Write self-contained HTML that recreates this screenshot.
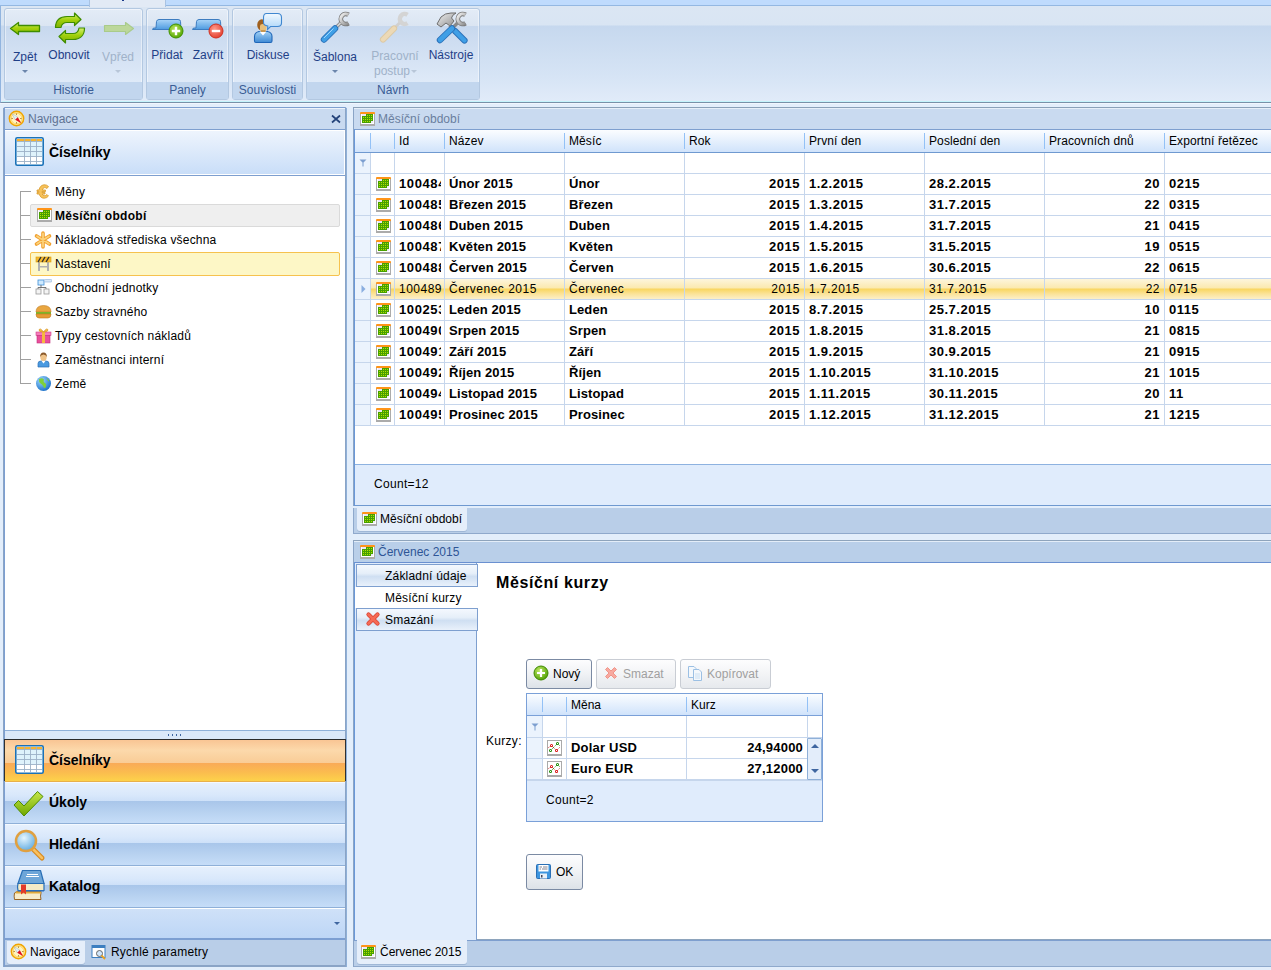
<!DOCTYPE html>
<html><head><meta charset="utf-8">
<style>
*{box-sizing:border-box;margin:0;padding:0}
html,body{width:1271px;height:970px;overflow:hidden;background:#e3eefb;font-family:"Liberation Sans",sans-serif;font-size:12px;color:#000}
.a{position:absolute}
.t{position:absolute;white-space:nowrap;line-height:14px}
/* ribbon */
#rtop{left:0;top:0;width:1271px;height:6px;background:#bfdbfd;border-bottom:1px solid #94b8e2}
#rtab{left:89px;top:0;width:77px;height:7px;background:#e2eaf5;border-left:1px solid #a9c3e3;border-right:1px solid #a9c3e3}
#rbody{left:0;top:6px;width:1271px;height:97px;box-shadow:0 1px 0 #f0f6fe;background:linear-gradient(#dbe6f3 0,#d9e5f3 19px,#c6d8ee 20px,#d6e4f5 70px,#e1ebf9 95px);border-bottom:1px solid #7890a8;border-left:1px solid #91b4df}
.grp{position:absolute;top:8px;height:92px;border:1px solid #b3c8e1;border-radius:3px;background:linear-gradient(#e3ecf7 0,#dbe5f2 17px,#c7d8ee 17px,#dfeaf8 74px);box-shadow:inset 0 0 0 1px rgba(255,255,255,.45)}
.glab{position:absolute;left:0;right:0;bottom:0;height:17px;background:#c2d6ee;color:#3a5d95;text-align:center;line-height:17px;font-size:12px}
.rbtn{position:absolute;color:#1f4087;font-size:12px;text-align:center;white-space:nowrap;line-height:14px}
.dis{color:#a0b2c9}
.dd{position:absolute;width:0;height:0;border-left:3px solid transparent;border-right:3px solid transparent;border-top:3px solid #6c86ac}
/* panels */
.phdr{position:absolute;height:22px;background:#c9daf0;border-bottom:1px solid #7e9fcf}
.ptitle{position:absolute;color:#6a7f9e;font-size:12px;line-height:14px;white-space:nowrap}
.calic{position:absolute;width:14px;height:13px;background:#fff;border-top:2px solid #f7931e;box-shadow:0 1px 0 #aaa}
.calic:before{content:"";position:absolute;left:2px;top:2px;width:10px;height:8px;background:#4fa300;background-image:radial-gradient(circle,#a8d866 0.6px,transparent 0.9px);background-size:2.5px 2px}
</style></head><body>

<!-- ===== RIBBON ===== -->
<div id="rtop" class="a"></div>
<div id="rbody" class="a"></div>
<div id="rtab" class="a"></div>
<div class="a" style="left:2px;top:101px;width:1269px;height:1px;background:#c4f4fc"></div>
<div class="a" style="left:122px;top:0;width:2px;height:1px;background:#1a3a8a"></div>

<div class="grp" style="left:4px;width:139px">
  <div class="glab">Historie</div>
</div>
<div class="grp" style="left:146px;width:83px">
  <div class="glab">Panely</div>
</div>
<div class="grp" style="left:232px;width:71px">
  <div class="glab">Souvislosti</div>
</div>
<div class="grp" style="left:306px;width:174px">
  <div class="glab">Návrh</div>
</div>

<div class="rbtn" style="left:11px;top:50px;width:28px">Zpět</div>
<div class="dd" style="left:22px;top:70px"></div>
<div class="rbtn" style="left:46px;top:48px;width:46px">Obnovit</div>
<div class="rbtn dis" style="left:99px;top:50px;width:38px">Vpřed</div>
<div class="dd" style="left:115px;top:70px;border-top-color:#b8c6d8"></div>
<div class="rbtn" style="left:149px;top:48px;width:36px">Přidat</div>
<div class="rbtn" style="left:189px;top:48px;width:38px">Zavřít</div>
<div class="rbtn" style="left:243px;top:48px;width:50px">Diskuse</div>
<div class="rbtn" style="left:310px;top:50px;width:50px">Šablona</div>
<div class="dd" style="left:332px;top:70px"></div>
<div class="rbtn dis" style="left:367px;top:49px;width:56px">Pracovní</div>
<div class="rbtn dis" style="left:367px;top:64px;width:50px">postup</div>
<div class="dd" style="left:411px;top:70px;border-top-color:#b8c6d8"></div>
<div class="rbtn" style="left:424px;top:48px;width:54px">Nástroje</div>


<!-- ribbon icons -->
<svg class="a" style="left:8px;top:20px" width="36" height="18" viewBox="0 0 36 18">
 <defs><linearGradient id="ga" x1="0" y1="0" x2="0" y2="1"><stop offset="0" stop-color="#d9f27a"/><stop offset=".45" stop-color="#a6d30c"/><stop offset="1" stop-color="#88b800"/></linearGradient></defs>
 <path d="M2.5 8.5 L10.5 2.5 L10.5 5.5 L31.5 5.5 L31.5 11.5 L10.5 11.5 L10.5 14.5 Z" fill="url(#ga)" stroke="#3f8c00" stroke-width="1.3" stroke-linejoin="round"/>
</svg>
<svg class="a" style="left:100px;top:20px" width="36" height="18" viewBox="0 0 36 18">
 <path d="M33.5 8.5 L25.5 2.5 L25.5 5.5 L4.5 5.5 L4.5 11.5 L25.5 11.5 L25.5 14.5 Z" fill="#bcd79a" stroke="#a9cb8a" stroke-width="1.1" stroke-linejoin="round"/>
</svg>
<svg class="a" style="left:53px;top:11px" width="34" height="34" viewBox="0 0 34 34">
 <defs><linearGradient id="gr" x1="0" y1="0" x2="0" y2="1"><stop offset="0" stop-color="#d6f070"/><stop offset=".5" stop-color="#9fcf0a"/><stop offset="1" stop-color="#7fb000"/></linearGradient></defs>
 <path d="M2.5 16.5 C2.5 9 7 5.5 14 5.5 L21.5 5.5 L21.5 2 L28 8.5 L21.5 14.5 L21.5 11.5 L14 11.5 C10.5 11.5 8.5 13.5 8 16.5 Z" fill="url(#gr)" stroke="#3f8c00" stroke-width="1.2" stroke-linejoin="round"/>
 <path d="M31.5 17 C31.5 24.5 27 28.5 20 28.5 L12.5 28.5 L12.5 32 L6 25.5 L12.5 19.5 L12.5 22.5 L20 22.5 C23.5 22.5 25.5 20.5 26 17 Z" fill="url(#gr)" stroke="#3f8c00" stroke-width="1.2" stroke-linejoin="round"/>
</svg>
<svg class="a" style="left:152px;top:17px" width="34" height="24" viewBox="0 0 34 24">
 <defs><linearGradient id="gt" x1="0" y1="0" x2="0" y2="1"><stop offset="0" stop-color="#a9d4f8"/><stop offset="1" stop-color="#4d9be0"/></linearGradient>
 <radialGradient id="gg" cx=".4" cy=".35" r=".7"><stop offset="0" stop-color="#b7e55a"/><stop offset="1" stop-color="#52a300"/></radialGradient>
 <radialGradient id="grd" cx=".4" cy=".35" r=".7"><stop offset="0" stop-color="#ff9a8a"/><stop offset="1" stop-color="#e23c2c"/></radialGradient></defs>
 <path d="M0.5 12.5 Q0.5 11 2.5 11 L4 11 L4.5 4.5 Q5 2.5 7 2.5 L26 2.5 Q28.5 2.5 28.5 4.5 L29 12.5 Z" fill="url(#gt)" stroke="#3d7cc0" stroke-width="1"/>
 <circle cx="24" cy="14" r="7" fill="url(#gg)" stroke="#3f9000" stroke-width="1"/>
 <path d="M24 9.8 V18.2 M19.8 14 H28.2" stroke="#fff" stroke-width="2.4"/>
</svg>
<svg class="a" style="left:192px;top:17px" width="34" height="24" viewBox="0 0 34 24">
 <path d="M0.5 12.5 Q0.5 11 2.5 11 L4 11 L4.5 4.5 Q5 2.5 7 2.5 L26 2.5 Q28.5 2.5 28.5 4.5 L29 12.5 Z" fill="url(#gt)" stroke="#3d7cc0" stroke-width="1"/>
 <circle cx="24" cy="14" r="7" fill="url(#grd)" stroke="#d03020" stroke-width="1"/>
 <path d="M19.8 14 H28.2" stroke="#fff" stroke-width="2.4"/>
</svg>
<svg class="a" style="left:252px;top:11px" width="34" height="34" viewBox="0 0 34 34">
 <defs><linearGradient id="gb" x1="0" y1="0" x2="0" y2="1"><stop offset="0" stop-color="#f2f9ff"/><stop offset="1" stop-color="#a9d4f8"/></linearGradient>
 <linearGradient id="gs" x1="0" y1="0" x2="0" y2="1"><stop offset="0" stop-color="#9fd0f6"/><stop offset="1" stop-color="#3f8ad4"/></linearGradient></defs>
 <path d="M2.5 30 V25.5 Q2.5 21.5 7 20.5 H15.5 Q20 21.5 20 25.5 V30 Q20 31.5 18.5 31.5 H4 Q2.5 31.5 2.5 30 Z" fill="url(#gs)" stroke="#1f66b8" stroke-width="1.1"/>
 <path d="M7.5 20.5 L11 24.5 L14.5 20.5 Z" fill="#fff"/>
 <ellipse cx="9.8" cy="14" rx="4.6" ry="5.8" fill="#a0601e"/>
 <path d="M8 15 Q8 13 10.5 13 Q14.5 13 14.5 16.5 Q14.5 21 11 21 Q8 21 8 18 Z" fill="#e8bf78"/>
 <rect x="9" y="19" width="4.5" height="2" fill="#c89850"/>
 <path d="M14.5 2.5 H25.5 Q29.5 2.5 29.5 6.5 V12 Q29.5 15.5 25.5 15.5 H18.5 L15.5 18.5 L15.8 15 Q11.5 14.5 11.5 11.5 V6.5 Q11.5 2.5 14.5 2.5 Z" fill="url(#gb)" stroke="#3f87d0" stroke-width="1.1"/>
</svg>
<svg class="a" style="left:319px;top:11px" width="34" height="34" viewBox="0 0 34 34">
 <defs><linearGradient id="gw" x1="0" y1="0" x2="1" y2="1"><stop offset="0" stop-color="#f2f2f2"/><stop offset="1" stop-color="#8c8c8c"/></linearGradient></defs>
 <path d="M29.5 3.8 A5 5 0 1 0 29.5 12.2" fill="none" stroke="#7a7a7a" stroke-width="4.6"/>
 <path d="M29.5 3.8 A5 5 0 1 0 29.5 12.2" fill="none" stroke="url(#gw)" stroke-width="3"/>
 <path d="M21.5 12 L15.5 18" stroke="#8a8a8a" stroke-width="3.4"/>
 <path d="M21.5 12 L15.5 18" stroke="#d8d8d8" stroke-width="1.6"/>
 <path d="M16 17.5 L5 28.5" stroke="#2a70b8" stroke-width="6.4" stroke-linecap="round"/>
 <path d="M16 17.5 L5 28.5" stroke="#3f9fe6" stroke-width="4.6" stroke-linecap="round"/>
 <path d="M14.5 17.5 L5 27" stroke="#9fd4fa" stroke-width="1"/>
</svg>
<svg class="a" style="left:378px;top:11px" width="34" height="34" viewBox="0 0 34 34">
 <path d="M29.5 3.8 A5 5 0 1 0 29.5 12.2" fill="none" stroke="#d4d4d4" stroke-width="4.4"/>
 <path d="M21.5 12 L15.5 18" stroke="#d0d0d0" stroke-width="3"/>
 <path d="M16 17.5 L5 28.5" stroke="#dcc9a4" stroke-width="6.2" stroke-linecap="round"/>
 <path d="M16 17.5 L5 28.5" stroke="#ecd9b6" stroke-width="4.4" stroke-linecap="round"/>
</svg>
<svg class="a" style="left:435px;top:11px" width="36" height="34" viewBox="0 0 36 34">
 <path d="M2 13 L6 6 Q10 2 16 2 L21 2 Q17 4 16.5 7 L19 10 L15 15 L11 12 L6 16 Z" fill="url(#gw)" stroke="#6e6e6e" stroke-width="1"/>
 <path d="M14.5 14.5 L20 20" stroke="#8a8a8a" stroke-width="3"/>
 <path d="M20 20 L29.5 29.5" stroke="#2a70b8" stroke-width="6.2" stroke-linecap="round"/>
 <path d="M20 20 L29.5 29.5" stroke="#3f9fe6" stroke-width="4.4" stroke-linecap="round"/>
 <path d="M30.5 3.8 A5 5 0 1 0 30.5 12.2" fill="none" stroke="#7a7a7a" stroke-width="4.6"/>
 <path d="M30.5 3.8 A5 5 0 1 0 30.5 12.2" fill="none" stroke="url(#gw)" stroke-width="3"/>
 <path d="M22.5 12 L16.5 18" stroke="#8a8a8a" stroke-width="3.4"/>
 <path d="M17 17.5 L5 29" stroke="#2a70b8" stroke-width="6.4" stroke-linecap="round"/>
 <path d="M17 17.5 L5 29" stroke="#3f9fe6" stroke-width="4.6" stroke-linecap="round"/>
</svg>
<!-- ===== NAV PANEL ===== -->
<div class="a" style="left:3px;top:107px;width:344px;height:834px;border:1px solid #7e9fcf;border-radius:2px;background:#fff"></div>
<div class="phdr" style="left:4px;top:108px;width:342px"></div>

<div class="a" style="left:4px;top:108px;width:342px;height:1px;background:#eef4fb"></div>
<svg class="a" style="left:8px;top:110px" width="17" height="17" viewBox="0 0 17 17">
 <circle cx="8.5" cy="8.5" r="7.2" fill="#ffe58a" stroke="#f0a400" stroke-width="1.4"/>
 <circle cx="8.5" cy="8.5" r="5.3" fill="#fff3c0" stroke="#fcd060" stroke-width=".8"/>
 <g fill="#8a5a00"><rect x="8" y="3.6" width="1" height="1"/><rect x="8" y="12.4" width="1" height="1"/><rect x="3.6" y="8" width="1" height="1"/><rect x="12.4" y="8" width="1" height="1"/></g>
 <path d="M4 3.5 L9.8 7.2 L7.2 9.8 Z" fill="#dff0fa" stroke="#9ab" stroke-width=".4"/>
 <path d="M9.8 7.2 L13.2 13.2 L7.2 9.8 Z" fill="#e0101e"/>
</svg>
<div class="ptitle" style="left:28px;top:112px;color:#5f7393">Navigace</div>
<svg class="a" style="left:331px;top:114px" width="10" height="10" viewBox="0 0 10 10"><path d="M1 1.5 L9 8.5 M9 1.5 L1 8.5" stroke="#24437a" stroke-width="1.7"/></svg>

<div class="a" style="left:4px;top:130px;width:341px;height:45px;background:linear-gradient(#eef4fd,#c9def8);border:1px solid #fff;border-bottom:1px solid #fff;box-shadow:0 1px 0 #7e9fcf"></div>
<svg class="a" style="left:15px;top:137px" width="29" height="29" viewBox="0 0 29 29">
 <rect x="0.8" y="0.8" width="27.4" height="27.4" rx="1.5" fill="#fff" stroke="#1a72b8" stroke-width="1.6"/>
 <rect x="2" y="2" width="25" height="25" fill="#def2fb"/>
 <rect x="2" y="19" width="25" height="8" fill="#fff"/>
 <rect x="2" y="2" width="25" height="2.2" fill="#f6b330"/>
 <path d="M2 4.5 H27 M2 9.5 H27 M2 14.5 H27 M2 19.5 H27 M2 24.5 H27 M9.5 2 V27 M15.5 2 V27 M21.5 2 V27" stroke="#9bb0c6" stroke-width=".9"/>
</svg>
<div class="t" style="left:49px;top:144px;font-size:14px;font-weight:bold;line-height:16px">Číselníky</div>

<!-- tree -->
<div class="a" style="left:20px;top:191px;width:1px;height:193px;background:#a0a0a0"></div>
<div class="a" style="left:20px;top:191px;width:11px;height:1px;background:#a0a0a0"></div>
<div class="a" style="left:20px;top:215px;width:11px;height:1px;background:#a0a0a0"></div>
<div class="a" style="left:20px;top:239px;width:11px;height:1px;background:#a0a0a0"></div>
<div class="a" style="left:20px;top:263px;width:11px;height:1px;background:#a0a0a0"></div>
<div class="a" style="left:20px;top:287px;width:11px;height:1px;background:#a0a0a0"></div>
<div class="a" style="left:20px;top:311px;width:11px;height:1px;background:#a0a0a0"></div>
<div class="a" style="left:20px;top:335px;width:11px;height:1px;background:#a0a0a0"></div>
<div class="a" style="left:20px;top:359px;width:11px;height:1px;background:#a0a0a0"></div>
<div class="a" style="left:20px;top:383px;width:11px;height:1px;background:#a0a0a0"></div>

<div class="a" style="left:30px;top:204px;width:310px;height:23px;background:#efefef;border:1px solid #dadada;border-radius:2px"></div>
<div class="a" style="left:30px;top:252px;width:310px;height:24px;background:#fdf7c6;border:1px solid #f6c24e;border-radius:2px"></div>

<div class="t" style="left:55px;top:185px;letter-spacing:.2px">Měny</div>
<div class="t" style="left:55px;top:209px;font-weight:bold;letter-spacing:.3px">Měsíční období</div>
<div class="t" style="left:55px;top:233px;letter-spacing:.2px">Nákladová střediska všechna</div>
<div class="t" style="left:55px;top:257px;letter-spacing:.2px">Nastavení</div>
<div class="t" style="left:55px;top:281px;letter-spacing:.2px">Obchodní jednotky</div>
<div class="t" style="left:55px;top:305px;letter-spacing:.2px">Sazby stravného</div>
<div class="t" style="left:55px;top:329px;letter-spacing:.2px">Typy cestovních nákladů</div>
<div class="t" style="left:55px;top:353px;letter-spacing:.2px">Zaměstnanci interní</div>
<div class="t" style="left:55px;top:377px;letter-spacing:.2px">Země</div>

<svg class="a" style="left:35px;top:183px" width="17" height="17" viewBox="0 0 17 17">
 <path d="M13.5 3.5 Q11.5 1.5 9 1.8 Q5 2.3 4 7 L2 7 L2 8.5 L3.8 8.5 L3.8 9.5 L2 9.5 L2 11 L4.2 11 Q5.5 15.5 9.5 15.2 Q12 15 13.5 13 L12 11.5 Q10.8 12.8 9.5 12.6 Q7.6 12.4 7.2 11 L10 11 L10 9.5 L7 9.5 L7 8.5 L10.5 8.5 L10.5 7 L7.3 7 Q8 4.7 9.6 4.6 Q11 4.6 12 5.5 Z" fill="#f7c25a" stroke="#d99a2b" stroke-width=".8"/>
</svg>
<svg class="a" style="left:37px;top:208px" width="15" height="14" viewBox="0 0 15 14"><rect x="0" y="1" width="15" height="13" fill="#ababab"/><rect x="0" y="0" width="15" height="2.2" rx="1" fill="#ff9418"/><rect x="1" y="2" width="13" height="10" fill="#fff"/><rect x="2" y="2" width="11" height="9" fill="#47a000"/><g fill="#b4e000"><rect x="7" y="3" width="1" height="1"/><rect x="9" y="3" width="1" height="1"/><rect x="11" y="3" width="1" height="1"/><rect x="3" y="5" width="1" height="1"/><rect x="5" y="5" width="1" height="1"/><rect x="7" y="5" width="1" height="1"/><rect x="9" y="5" width="1" height="1"/><rect x="11" y="5" width="1" height="1"/><rect x="3" y="7" width="1" height="1"/><rect x="5" y="7" width="1" height="1"/><rect x="7" y="7" width="1" height="1"/><rect x="9" y="7" width="1" height="1"/><rect x="11" y="7" width="1" height="1"/><rect x="3" y="9" width="1" height="1"/><rect x="5" y="9" width="1" height="1"/><rect x="7" y="9" width="1" height="1"/><rect x="9" y="9" width="1" height="1"/></g><rect x="2" y="2" width="4" height="2" fill="#ece6f6"/><rect x="11" y="9" width="2" height="2" fill="#ece6f6"/></svg>
<svg class="a" style="left:34px;top:231px" width="18" height="18" viewBox="0 0 18 18">
 <g stroke="#f0a030" stroke-width="3.6" stroke-linecap="round"><path d="M9 2 V16 M2.5 5 L15.5 13 M15.5 5 L2.5 13"/></g>
 <g stroke="#fcd27a" stroke-width="1.8" stroke-linecap="round"><path d="M9 2.5 V15.5 M3 5.3 L15 12.7 M15 5.3 L3 12.7"/></g>
</svg>
<svg class="a" style="left:35px;top:255px" width="17" height="17" viewBox="0 0 17 17">
 <rect x="3" y="6" width="2" height="10" fill="#b0b0b0"/><rect x="12" y="6" width="2" height="10" fill="#b0b0b0"/>
 <rect x="3" y="11" width="11" height="1.5" fill="#b0b0b0"/>
 <rect x="1" y="2" width="15" height="5" fill="#f6b92e" stroke="#d89a10" stroke-width=".6"/>
 <path d="M3 7 L6 2 M7 7 L10 2 M11 7 L14 2" stroke="#333" stroke-width="1.4"/>
</svg>
<svg class="a" style="left:35px;top:279px" width="17" height="17" viewBox="0 0 17 17">
 <rect x="3" y="1" width="6" height="5" fill="#cfeaff" stroke="#3f8fd6" stroke-width=".8"/>
 <path d="M6 6 V8.5 M3 8.5 H11 M3 8.5 V10 M11 8.5 V10" stroke="#555" stroke-width=".8"/>
 <rect x="1" y="10" width="5" height="5" fill="#f4f4f4" stroke="#999" stroke-width=".8"/>
 <rect x="9" y="10" width="5" height="5" fill="#f4f4f4" stroke="#999" stroke-width=".8"/>
 <rect x="9" y="0.5" width="8" height="2.5" rx="1.2" fill="#d9e8f8" stroke="#8fb0d8" stroke-width=".6"/>
</svg>
<svg class="a" style="left:35px;top:303px" width="17" height="17" viewBox="0 0 17 17">
 <path d="M1 9 Q1 2.5 8.5 2.5 Q16 2.5 16 9 Z" fill="#e9a640" stroke="#c07a20" stroke-width=".6"/>
 <rect x="1" y="9" width="15" height="2" fill="#7db52a"/>
 <path d="M1 11 H16 Q16 15 13 15 H4 Q1 15 1 11 Z" fill="#e59b35" stroke="#c07a20" stroke-width=".6"/>
</svg>
<svg class="a" style="left:35px;top:327px" width="17" height="17" viewBox="0 0 17 17">
 <rect x="1" y="5" width="15" height="3.5" fill="#f57cba" stroke="#d0408a" stroke-width=".6"/>
 <rect x="2" y="8.5" width="13" height="7.5" fill="#ea4f9c" stroke="#c0307a" stroke-width=".6"/>
 <rect x="7" y="5" width="3" height="11" fill="#f5b840"/>
 <path d="M8.5 5 Q5 0 4 3 Q3.5 5 8.5 5 Q13 5 13 3 Q12 0 8.5 5" fill="#f5b840" stroke="#d09020" stroke-width=".6"/>
</svg>
<svg class="a" style="left:35px;top:351px" width="17" height="17" viewBox="0 0 17 17">
 <path d="M3 16 V12.5 Q3 10 6 10 H11 Q14 10 14 12.5 V16 Z" fill="#4a9ae0" stroke="#2a6fb5" stroke-width=".7"/>
 <path d="M6.5 10 L8.5 12.5 L10.5 10 Z" fill="#fff"/>
 <ellipse cx="8.5" cy="6" rx="3.2" ry="4" fill="#f0c48a"/>
 <path d="M5.2 6 Q5 1.5 8.5 1.5 Q12 1.5 11.8 6 Q11 3.5 8.5 3.5 Q6 3.5 5.2 6 Z" fill="#8b5a2b"/>
</svg>
<svg class="a" style="left:35px;top:375px" width="17" height="17" viewBox="0 0 17 17">
 <defs><radialGradient id="ge" cx=".35" cy=".3" r=".75"><stop offset="0" stop-color="#9ed8ff"/><stop offset="1" stop-color="#1a6fc8"/></radialGradient></defs>
 <circle cx="8.5" cy="8.5" r="7.5" fill="url(#ge)"/>
 <path d="M4 4 Q7 2.5 9 4.5 Q8 7 10 8 Q12 9.5 10.5 12.5 Q9 14 8.5 11.5 Q7 9 5.5 8.5 Q3.5 7 4 4 Z M11.5 3 Q14 4 14.5 6.5 Q13 6.5 11.5 3 Z" fill="#7fd03a"/>
</svg>

<!-- splitter & outlook bar -->
<div class="a" style="left:4px;top:730px;width:342px;height:1px;background:#8fb0d8"></div>
<div class="a" style="left:4px;top:731px;width:342px;height:8px;background:#dbe8f8"></div>
<div class="a" style="left:168px;top:734px;width:15px;height:2px;background-image:linear-gradient(90deg,#3f66a0 1px,transparent 1px);background-size:4px 2px"></div>

<div class="a" style="left:4px;top:739px;width:342px;height:43px;border:1px solid #2b2b2b;border-bottom-color:#e8b04a;background:linear-gradient(#f9c594 0,#fcd9ab 25%,#f9cc96 56%,#f9aa58 56%,#fbbd4e 80%,#fdd24a 100%)"></div>
<div class="a" style="left:4px;top:782px;width:342px;height:42px;border-bottom:1px solid #8fb0d8;border-top:1px solid #f4f9ff;box-shadow:inset 1px 0 0 #fff,inset -1px 0 0 #fff;background:linear-gradient(#e6f0fd 0,#d9e8fb 30%,#cde0f8 46%,#a9c6ea 46%,#b9d3f1 75%,#c6ddf8 100%)"></div>
<div class="a" style="left:4px;top:824px;width:342px;height:42px;border-bottom:1px solid #8fb0d8;border-top:1px solid #f4f9ff;box-shadow:inset 1px 0 0 #fff,inset -1px 0 0 #fff;background:linear-gradient(#e6f0fd 0,#d9e8fb 30%,#cde0f8 46%,#a9c6ea 46%,#b9d3f1 75%,#c6ddf8 100%)"></div>
<div class="a" style="left:4px;top:866px;width:342px;height:42px;border-bottom:1px solid #8fb0d8;border-top:1px solid #f4f9ff;box-shadow:inset 1px 0 0 #fff,inset -1px 0 0 #fff;background:linear-gradient(#e6f0fd 0,#d9e8fb 30%,#cde0f8 46%,#a9c6ea 46%,#b9d3f1 75%,#c6ddf8 100%)"></div>
<div class="a" style="left:4px;top:908px;width:342px;height:32px;border:1px solid #fff;border-bottom:2px solid #7c9fd2;background:linear-gradient(#cfe1f8,#bdd6f6)"></div>
<div class="dd" style="left:334px;top:922px;border-left-width:3px;border-right-width:3px;border-top:3px solid #3f66a0"></div>

<svg class="a" style="left:15px;top:745px" width="29" height="29" viewBox="0 0 29 29">
 <rect x="0.8" y="0.8" width="27.4" height="27.4" rx="1.5" fill="#fff" stroke="#1a72b8" stroke-width="1.6"/>
 <rect x="2" y="2" width="25" height="25" fill="#def2fb"/>
 <rect x="2" y="19" width="25" height="8" fill="#fff"/>
 <rect x="2" y="2" width="25" height="2.2" fill="#f6b330"/>
 <path d="M2 4.5 H27 M2 9.5 H27 M2 14.5 H27 M2 19.5 H27 M2 24.5 H27 M9.5 2 V27 M15.5 2 V27 M21.5 2 V27" stroke="#9bb0c6" stroke-width=".9"/>
</svg>
<div class="t" style="left:49px;top:752px;font-size:14px;font-weight:bold;line-height:16px">Číselníky</div>
<svg class="a" style="left:12px;top:788px" width="34" height="30" viewBox="0 0 34 30">
 <defs><linearGradient id="gk" x1="0" y1="0" x2="0" y2="1"><stop offset="0" stop-color="#c6e64a"/><stop offset="1" stop-color="#6fa800"/></linearGradient></defs>
 <path d="M2 17 L6.5 12.5 L12 18 L25.5 3.5 L31 8.5 L12 28 Z" fill="url(#gk)" stroke="#4f8c00" stroke-width="1" stroke-linejoin="round"/>
</svg>
<div class="t" style="left:49px;top:794px;font-size:14px;font-weight:bold;line-height:16px">Úkoly</div>
<svg class="a" style="left:13px;top:828px" width="33" height="34" viewBox="0 0 33 34">
 <defs><radialGradient id="gm" cx=".4" cy=".35" r=".7"><stop offset="0" stop-color="#e6f6ff"/><stop offset="1" stop-color="#5aa8e0"/></radialGradient></defs>
 <path d="M19 20 L29 30" stroke="#d88a20" stroke-width="5" stroke-linecap="round"/>
 <path d="M19 20 L29 30" stroke="#f8c060" stroke-width="2.5" stroke-linecap="round"/>
 <circle cx="13" cy="13" r="10" fill="url(#gm)" stroke="#e0a040" stroke-width="2.5"/>
</svg>
<div class="t" style="left:49px;top:836px;font-size:14px;font-weight:bold;line-height:16px">Hledání</div>
<svg class="a" style="left:13px;top:869px" width="33" height="33" viewBox="0 0 33 33">
 <path d="M1.5 30.5 Q0.8 27 1.5 24 L4 22.5 H28 L28 24 Q27 27 28 30.5 Z" fill="#f7eccb" stroke="#9a6424" stroke-width="1"/>
 <path d="M3 22.5 H28 V24.5 H2.5 Z" fill="#e3ab3c"/>
 <path d="M5 14.5 H31 V21.5 H5 Q4 18 5 14.5 Z" fill="#f5ebc6" stroke="#2a6fb5" stroke-width="1.2"/>
 <path d="M5 21 H31 V22.5 H5 Z" fill="#2a70c0"/>
 <path d="M9.5 1.5 H27.5 L31 14.5 H5 Z" fill="#6ea6d8" stroke="#2a6fb5" stroke-width="1.2" stroke-linejoin="round"/>
 <path d="M14 5.5 H25 M13 7.5 H26" stroke="#fff" stroke-width="1"/>
 <path d="M8 15.5 H13 V25.5 L10.5 23.5 L8 25.5 Z" fill="#e23a2a"/>
</svg>
<div class="t" style="left:49px;top:878px;font-size:14px;font-weight:bold;line-height:16px">Katalog</div>

<!-- bottom tab strip nav -->
<div class="a" style="left:3px;top:940px;width:344px;height:27px;background:#b9cee8;border:2px solid #8aa4c6;border-top:none;border-right-width:1px"></div>
<div class="a" style="left:7px;top:941px;width:78px;height:23px;background:#e5eefa;border-radius:0 0 3px 3px;box-shadow:0 1px 0 #9fb7d6"></div>
<svg class="a" style="left:10px;top:943px" width="17" height="17" viewBox="0 0 17 17">
 <circle cx="8.5" cy="8.5" r="7.2" fill="#ffe58a" stroke="#f0a400" stroke-width="1.4"/>
 <circle cx="8.5" cy="8.5" r="5.3" fill="#fff3c0" stroke="#fcd060" stroke-width=".8"/>
 <g fill="#8a5a00"><rect x="8" y="3.6" width="1" height="1"/><rect x="8" y="12.4" width="1" height="1"/><rect x="3.6" y="8" width="1" height="1"/><rect x="12.4" y="8" width="1" height="1"/></g>
 <path d="M4 3.5 L9.8 7.2 L7.2 9.8 Z" fill="#dff0fa" stroke="#9ab" stroke-width=".4"/>
 <path d="M9.8 7.2 L13.2 13.2 L7.2 9.8 Z" fill="#e0101e"/>
</svg>
<div class="t" style="left:30px;top:945px">Navigace</div>
<svg class="a" style="left:91px;top:944px" width="16" height="16" viewBox="0 0 16 16">
 <rect x="1" y="1.5" width="13" height="12" fill="#fff" stroke="#3c7fc0" stroke-width="1"/>
 <rect x="1" y="1.5" width="13" height="2.5" fill="#3c7fc0"/>
 <circle cx="8.5" cy="9.5" r="3" fill="#cfe6fb" stroke="#666" stroke-width="1"/>
 <path d="M10.5 11.5 L14 15" stroke="#e8a020" stroke-width="1.8"/>
</svg>
<div class="t" style="left:111px;top:945px;letter-spacing:.2px">Rychlé parametry</div>


<!-- ===== GRID PANEL ===== -->
<div class="a" style="left:353px;top:107px;width:930px;height:399px;border:1px solid #8aa0b8;background:#fff"></div>
<div class="phdr" style="left:354px;top:108px;width:917px;border-top:1px solid #e6eff9"></div>
<svg class="a" style="left:360px;top:112px" width="15" height="14" viewBox="0 0 15 14"><rect x="0" y="1" width="15" height="13" fill="#ababab"/><rect x="0" y="0" width="15" height="2.2" rx="1" fill="#ff9418"/><rect x="1" y="2" width="13" height="10" fill="#fff"/><rect x="2" y="2" width="11" height="9" fill="#47a000"/><g fill="#b4e000"><rect x="7" y="3" width="1" height="1"/><rect x="9" y="3" width="1" height="1"/><rect x="11" y="3" width="1" height="1"/><rect x="3" y="5" width="1" height="1"/><rect x="5" y="5" width="1" height="1"/><rect x="7" y="5" width="1" height="1"/><rect x="9" y="5" width="1" height="1"/><rect x="11" y="5" width="1" height="1"/><rect x="3" y="7" width="1" height="1"/><rect x="5" y="7" width="1" height="1"/><rect x="7" y="7" width="1" height="1"/><rect x="9" y="7" width="1" height="1"/><rect x="11" y="7" width="1" height="1"/><rect x="3" y="9" width="1" height="1"/><rect x="5" y="9" width="1" height="1"/><rect x="7" y="9" width="1" height="1"/><rect x="9" y="9" width="1" height="1"/></g><rect x="2" y="2" width="4" height="2" fill="#ece6f6"/><rect x="11" y="9" width="2" height="2" fill="#ece6f6"/></svg>
<div class="ptitle" style="left:378px;top:112px">Měsíční období</div>

<!-- grid -->
<div class="a" style="left:355px;top:130px;width:916px;height:22px;background:linear-gradient(#fbfdff,#d0e3fb)"></div>
<div class="a" style="left:355px;top:152px;width:916px;height:1px;background:#6f99d0"></div>
<div class="a" style="left:370px;top:133px;width:1px;height:16px;background:#93c1f6"></div>
<div class="a" style="left:394px;top:133px;width:1px;height:16px;background:#93c1f6"></div>
<div class="a" style="left:444px;top:133px;width:1px;height:16px;background:#93c1f6"></div>
<div class="a" style="left:564px;top:133px;width:1px;height:16px;background:#93c1f6"></div>
<div class="a" style="left:684px;top:133px;width:1px;height:16px;background:#93c1f6"></div>
<div class="a" style="left:804px;top:133px;width:1px;height:16px;background:#93c1f6"></div>
<div class="a" style="left:924px;top:133px;width:1px;height:16px;background:#93c1f6"></div>
<div class="a" style="left:1044px;top:133px;width:1px;height:16px;background:#93c1f6"></div>
<div class="a" style="left:1164px;top:133px;width:1px;height:16px;background:#93c1f6"></div>
<div class="t" style="left:399px;top:134px;letter-spacing:.1px">Id</div>
<div class="t" style="left:449px;top:134px;letter-spacing:.1px">Název</div>
<div class="t" style="left:569px;top:134px;letter-spacing:.1px">Měsíc</div>
<div class="t" style="left:689px;top:134px;letter-spacing:.1px">Rok</div>
<div class="t" style="left:809px;top:134px;letter-spacing:.1px">První den</div>
<div class="t" style="left:929px;top:134px;letter-spacing:.1px">Poslední den</div>
<div class="t" style="left:1049px;top:134px;letter-spacing:.1px">Pracovních dnů</div>
<div class="t" style="left:1169px;top:134px;letter-spacing:.1px">Exportní řetězec</div>
<div class="a" style="left:355px;top:153px;width:15px;height:272px;background:#ebf3fd"></div>
<svg class="a" style="left:359px;top:159px" width="8" height="8" viewBox="0 0 8 8"><path d="M0.5 0.5 H7.5 L4.5 3.5 V7.5 H3.5 V3.5 Z" fill="#7d9fd0"/></svg>
<div class="a" style="left:370px;top:279px;width:901px;height:20px;background:linear-gradient(#fdf5dc 0,#fbe9ae 45%,#f9d65f 50%,#fbe39a 75%,#fcefc8 100%)"></div>
<svg class="a" style="left:360px;top:284px" width="7" height="10" viewBox="0 0 7 10"><path d="M1.5 1 L5.5 5 L1.5 9 Z" fill="#8aaee0"/></svg>
<div class="a" style="left:355px;top:173px;width:916px;height:1px;background:#c6d6ec"></div>
<div class="a" style="left:355px;top:194px;width:916px;height:1px;background:#c6d6ec"></div>
<div class="a" style="left:355px;top:215px;width:916px;height:1px;background:#c6d6ec"></div>
<div class="a" style="left:355px;top:236px;width:916px;height:1px;background:#c6d6ec"></div>
<div class="a" style="left:355px;top:257px;width:916px;height:1px;background:#c6d6ec"></div>
<div class="a" style="left:355px;top:278px;width:916px;height:1px;background:#c6d6ec"></div>
<div class="a" style="left:355px;top:299px;width:916px;height:1px;background:#c6d6ec"></div>
<div class="a" style="left:355px;top:320px;width:916px;height:1px;background:#c6d6ec"></div>
<div class="a" style="left:355px;top:341px;width:916px;height:1px;background:#c6d6ec"></div>
<div class="a" style="left:355px;top:362px;width:916px;height:1px;background:#c6d6ec"></div>
<div class="a" style="left:355px;top:383px;width:916px;height:1px;background:#c6d6ec"></div>
<div class="a" style="left:355px;top:404px;width:916px;height:1px;background:#c6d6ec"></div>
<div class="a" style="left:355px;top:425px;width:916px;height:1px;background:#c6d6ec"></div>
<div class="a" style="left:370px;top:153px;width:1px;height:273px;background:#c6d6ec"></div>
<div class="a" style="left:394px;top:153px;width:1px;height:273px;background:#c6d6ec"></div>
<div class="a" style="left:444px;top:153px;width:1px;height:273px;background:#c6d6ec"></div>
<div class="a" style="left:564px;top:153px;width:1px;height:273px;background:#c6d6ec"></div>
<div class="a" style="left:684px;top:153px;width:1px;height:273px;background:#c6d6ec"></div>
<div class="a" style="left:804px;top:153px;width:1px;height:273px;background:#c6d6ec"></div>
<div class="a" style="left:924px;top:153px;width:1px;height:273px;background:#c6d6ec"></div>
<div class="a" style="left:1044px;top:153px;width:1px;height:273px;background:#c6d6ec"></div>
<div class="a" style="left:1164px;top:153px;width:1px;height:273px;background:#c6d6ec"></div>
<svg class="a" style="left:376px;top:177px" width="15" height="14" viewBox="0 0 15 14"><rect x="0" y="1" width="15" height="13" fill="#ababab"/><rect x="0" y="0" width="15" height="2.2" rx="1" fill="#ff9418"/><rect x="1" y="2" width="13" height="10" fill="#fff"/><rect x="2" y="2" width="11" height="9" fill="#47a000"/><g fill="#b4e000"><rect x="7" y="3" width="1" height="1"/><rect x="9" y="3" width="1" height="1"/><rect x="11" y="3" width="1" height="1"/><rect x="3" y="5" width="1" height="1"/><rect x="5" y="5" width="1" height="1"/><rect x="7" y="5" width="1" height="1"/><rect x="9" y="5" width="1" height="1"/><rect x="11" y="5" width="1" height="1"/><rect x="3" y="7" width="1" height="1"/><rect x="5" y="7" width="1" height="1"/><rect x="7" y="7" width="1" height="1"/><rect x="9" y="7" width="1" height="1"/><rect x="11" y="7" width="1" height="1"/><rect x="3" y="9" width="1" height="1"/><rect x="5" y="9" width="1" height="1"/><rect x="7" y="9" width="1" height="1"/><rect x="9" y="9" width="1" height="1"/></g><rect x="2" y="2" width="4" height="2" fill="#ece6f6"/><rect x="11" y="9" width="2" height="2" fill="#ece6f6"/></svg>
<div class="t" style="left:399px;top:177px;width:42px;overflow:hidden;font-weight:bold;font-size:13px;letter-spacing:.6px">100484</div>
<div class="t" style="left:449px;top:177px;font-weight:bold;font-size:13px;letter-spacing:.1px">Únor 2015</div>
<div class="t" style="left:569px;top:177px;font-weight:bold;font-size:13px;letter-spacing:.1px">Únor</div>
<div class="t" style="left:684px;top:177px;width:116px;text-align:right;font-weight:bold;font-size:13px;letter-spacing:.5px">2015</div>
<div class="t" style="left:809px;top:177px;font-weight:bold;font-size:13px;letter-spacing:.5px">1.2.2015</div>
<div class="t" style="left:929px;top:177px;font-weight:bold;font-size:13px;letter-spacing:.5px">28.2.2015</div>
<div class="t" style="left:1044px;top:177px;width:116px;text-align:right;font-weight:bold;font-size:13px;letter-spacing:.5px">20</div>
<div class="t" style="left:1169px;top:177px;font-weight:bold;font-size:13px;letter-spacing:.5px">0215</div>
<svg class="a" style="left:376px;top:198px" width="15" height="14" viewBox="0 0 15 14"><rect x="0" y="1" width="15" height="13" fill="#ababab"/><rect x="0" y="0" width="15" height="2.2" rx="1" fill="#ff9418"/><rect x="1" y="2" width="13" height="10" fill="#fff"/><rect x="2" y="2" width="11" height="9" fill="#47a000"/><g fill="#b4e000"><rect x="7" y="3" width="1" height="1"/><rect x="9" y="3" width="1" height="1"/><rect x="11" y="3" width="1" height="1"/><rect x="3" y="5" width="1" height="1"/><rect x="5" y="5" width="1" height="1"/><rect x="7" y="5" width="1" height="1"/><rect x="9" y="5" width="1" height="1"/><rect x="11" y="5" width="1" height="1"/><rect x="3" y="7" width="1" height="1"/><rect x="5" y="7" width="1" height="1"/><rect x="7" y="7" width="1" height="1"/><rect x="9" y="7" width="1" height="1"/><rect x="11" y="7" width="1" height="1"/><rect x="3" y="9" width="1" height="1"/><rect x="5" y="9" width="1" height="1"/><rect x="7" y="9" width="1" height="1"/><rect x="9" y="9" width="1" height="1"/></g><rect x="2" y="2" width="4" height="2" fill="#ece6f6"/><rect x="11" y="9" width="2" height="2" fill="#ece6f6"/></svg>
<div class="t" style="left:399px;top:198px;width:42px;overflow:hidden;font-weight:bold;font-size:13px;letter-spacing:.6px">100485</div>
<div class="t" style="left:449px;top:198px;font-weight:bold;font-size:13px;letter-spacing:.1px">Březen 2015</div>
<div class="t" style="left:569px;top:198px;font-weight:bold;font-size:13px;letter-spacing:.1px">Březen</div>
<div class="t" style="left:684px;top:198px;width:116px;text-align:right;font-weight:bold;font-size:13px;letter-spacing:.5px">2015</div>
<div class="t" style="left:809px;top:198px;font-weight:bold;font-size:13px;letter-spacing:.5px">1.3.2015</div>
<div class="t" style="left:929px;top:198px;font-weight:bold;font-size:13px;letter-spacing:.5px">31.7.2015</div>
<div class="t" style="left:1044px;top:198px;width:116px;text-align:right;font-weight:bold;font-size:13px;letter-spacing:.5px">22</div>
<div class="t" style="left:1169px;top:198px;font-weight:bold;font-size:13px;letter-spacing:.5px">0315</div>
<svg class="a" style="left:376px;top:219px" width="15" height="14" viewBox="0 0 15 14"><rect x="0" y="1" width="15" height="13" fill="#ababab"/><rect x="0" y="0" width="15" height="2.2" rx="1" fill="#ff9418"/><rect x="1" y="2" width="13" height="10" fill="#fff"/><rect x="2" y="2" width="11" height="9" fill="#47a000"/><g fill="#b4e000"><rect x="7" y="3" width="1" height="1"/><rect x="9" y="3" width="1" height="1"/><rect x="11" y="3" width="1" height="1"/><rect x="3" y="5" width="1" height="1"/><rect x="5" y="5" width="1" height="1"/><rect x="7" y="5" width="1" height="1"/><rect x="9" y="5" width="1" height="1"/><rect x="11" y="5" width="1" height="1"/><rect x="3" y="7" width="1" height="1"/><rect x="5" y="7" width="1" height="1"/><rect x="7" y="7" width="1" height="1"/><rect x="9" y="7" width="1" height="1"/><rect x="11" y="7" width="1" height="1"/><rect x="3" y="9" width="1" height="1"/><rect x="5" y="9" width="1" height="1"/><rect x="7" y="9" width="1" height="1"/><rect x="9" y="9" width="1" height="1"/></g><rect x="2" y="2" width="4" height="2" fill="#ece6f6"/><rect x="11" y="9" width="2" height="2" fill="#ece6f6"/></svg>
<div class="t" style="left:399px;top:219px;width:42px;overflow:hidden;font-weight:bold;font-size:13px;letter-spacing:.6px">100486</div>
<div class="t" style="left:449px;top:219px;font-weight:bold;font-size:13px;letter-spacing:.1px">Duben 2015</div>
<div class="t" style="left:569px;top:219px;font-weight:bold;font-size:13px;letter-spacing:.1px">Duben</div>
<div class="t" style="left:684px;top:219px;width:116px;text-align:right;font-weight:bold;font-size:13px;letter-spacing:.5px">2015</div>
<div class="t" style="left:809px;top:219px;font-weight:bold;font-size:13px;letter-spacing:.5px">1.4.2015</div>
<div class="t" style="left:929px;top:219px;font-weight:bold;font-size:13px;letter-spacing:.5px">31.7.2015</div>
<div class="t" style="left:1044px;top:219px;width:116px;text-align:right;font-weight:bold;font-size:13px;letter-spacing:.5px">21</div>
<div class="t" style="left:1169px;top:219px;font-weight:bold;font-size:13px;letter-spacing:.5px">0415</div>
<svg class="a" style="left:376px;top:240px" width="15" height="14" viewBox="0 0 15 14"><rect x="0" y="1" width="15" height="13" fill="#ababab"/><rect x="0" y="0" width="15" height="2.2" rx="1" fill="#ff9418"/><rect x="1" y="2" width="13" height="10" fill="#fff"/><rect x="2" y="2" width="11" height="9" fill="#47a000"/><g fill="#b4e000"><rect x="7" y="3" width="1" height="1"/><rect x="9" y="3" width="1" height="1"/><rect x="11" y="3" width="1" height="1"/><rect x="3" y="5" width="1" height="1"/><rect x="5" y="5" width="1" height="1"/><rect x="7" y="5" width="1" height="1"/><rect x="9" y="5" width="1" height="1"/><rect x="11" y="5" width="1" height="1"/><rect x="3" y="7" width="1" height="1"/><rect x="5" y="7" width="1" height="1"/><rect x="7" y="7" width="1" height="1"/><rect x="9" y="7" width="1" height="1"/><rect x="11" y="7" width="1" height="1"/><rect x="3" y="9" width="1" height="1"/><rect x="5" y="9" width="1" height="1"/><rect x="7" y="9" width="1" height="1"/><rect x="9" y="9" width="1" height="1"/></g><rect x="2" y="2" width="4" height="2" fill="#ece6f6"/><rect x="11" y="9" width="2" height="2" fill="#ece6f6"/></svg>
<div class="t" style="left:399px;top:240px;width:42px;overflow:hidden;font-weight:bold;font-size:13px;letter-spacing:.6px">100487</div>
<div class="t" style="left:449px;top:240px;font-weight:bold;font-size:13px;letter-spacing:.1px">Květen 2015</div>
<div class="t" style="left:569px;top:240px;font-weight:bold;font-size:13px;letter-spacing:.1px">Květen</div>
<div class="t" style="left:684px;top:240px;width:116px;text-align:right;font-weight:bold;font-size:13px;letter-spacing:.5px">2015</div>
<div class="t" style="left:809px;top:240px;font-weight:bold;font-size:13px;letter-spacing:.5px">1.5.2015</div>
<div class="t" style="left:929px;top:240px;font-weight:bold;font-size:13px;letter-spacing:.5px">31.5.2015</div>
<div class="t" style="left:1044px;top:240px;width:116px;text-align:right;font-weight:bold;font-size:13px;letter-spacing:.5px">19</div>
<div class="t" style="left:1169px;top:240px;font-weight:bold;font-size:13px;letter-spacing:.5px">0515</div>
<svg class="a" style="left:376px;top:261px" width="15" height="14" viewBox="0 0 15 14"><rect x="0" y="1" width="15" height="13" fill="#ababab"/><rect x="0" y="0" width="15" height="2.2" rx="1" fill="#ff9418"/><rect x="1" y="2" width="13" height="10" fill="#fff"/><rect x="2" y="2" width="11" height="9" fill="#47a000"/><g fill="#b4e000"><rect x="7" y="3" width="1" height="1"/><rect x="9" y="3" width="1" height="1"/><rect x="11" y="3" width="1" height="1"/><rect x="3" y="5" width="1" height="1"/><rect x="5" y="5" width="1" height="1"/><rect x="7" y="5" width="1" height="1"/><rect x="9" y="5" width="1" height="1"/><rect x="11" y="5" width="1" height="1"/><rect x="3" y="7" width="1" height="1"/><rect x="5" y="7" width="1" height="1"/><rect x="7" y="7" width="1" height="1"/><rect x="9" y="7" width="1" height="1"/><rect x="11" y="7" width="1" height="1"/><rect x="3" y="9" width="1" height="1"/><rect x="5" y="9" width="1" height="1"/><rect x="7" y="9" width="1" height="1"/><rect x="9" y="9" width="1" height="1"/></g><rect x="2" y="2" width="4" height="2" fill="#ece6f6"/><rect x="11" y="9" width="2" height="2" fill="#ece6f6"/></svg>
<div class="t" style="left:399px;top:261px;width:42px;overflow:hidden;font-weight:bold;font-size:13px;letter-spacing:.6px">100488</div>
<div class="t" style="left:449px;top:261px;font-weight:bold;font-size:13px;letter-spacing:.1px">Červen 2015</div>
<div class="t" style="left:569px;top:261px;font-weight:bold;font-size:13px;letter-spacing:.1px">Červen</div>
<div class="t" style="left:684px;top:261px;width:116px;text-align:right;font-weight:bold;font-size:13px;letter-spacing:.5px">2015</div>
<div class="t" style="left:809px;top:261px;font-weight:bold;font-size:13px;letter-spacing:.5px">1.6.2015</div>
<div class="t" style="left:929px;top:261px;font-weight:bold;font-size:13px;letter-spacing:.5px">30.6.2015</div>
<div class="t" style="left:1044px;top:261px;width:116px;text-align:right;font-weight:bold;font-size:13px;letter-spacing:.5px">22</div>
<div class="t" style="left:1169px;top:261px;font-weight:bold;font-size:13px;letter-spacing:.5px">0615</div>
<svg class="a" style="left:376px;top:282px" width="15" height="14" viewBox="0 0 15 14"><rect x="0" y="1" width="15" height="13" fill="#ababab"/><rect x="0" y="0" width="15" height="2.2" rx="1" fill="#ff9418"/><rect x="1" y="2" width="13" height="10" fill="#fff"/><rect x="2" y="2" width="11" height="9" fill="#47a000"/><g fill="#b4e000"><rect x="7" y="3" width="1" height="1"/><rect x="9" y="3" width="1" height="1"/><rect x="11" y="3" width="1" height="1"/><rect x="3" y="5" width="1" height="1"/><rect x="5" y="5" width="1" height="1"/><rect x="7" y="5" width="1" height="1"/><rect x="9" y="5" width="1" height="1"/><rect x="11" y="5" width="1" height="1"/><rect x="3" y="7" width="1" height="1"/><rect x="5" y="7" width="1" height="1"/><rect x="7" y="7" width="1" height="1"/><rect x="9" y="7" width="1" height="1"/><rect x="11" y="7" width="1" height="1"/><rect x="3" y="9" width="1" height="1"/><rect x="5" y="9" width="1" height="1"/><rect x="7" y="9" width="1" height="1"/><rect x="9" y="9" width="1" height="1"/></g><rect x="2" y="2" width="4" height="2" fill="#ece6f6"/><rect x="11" y="9" width="2" height="2" fill="#ece6f6"/></svg>
<div class="t" style="left:399px;top:282px;width:43px;overflow:hidden;font-weight:normal;font-size:12px;letter-spacing:.5px">100489</div>
<div class="t" style="left:449px;top:282px;font-weight:normal;font-size:12px;letter-spacing:.5px">Červenec 2015</div>
<div class="t" style="left:569px;top:282px;font-weight:normal;font-size:12px;letter-spacing:.5px">Červenec</div>
<div class="t" style="left:684px;top:282px;width:116px;text-align:right;font-weight:normal;font-size:12px;letter-spacing:.5px">2015</div>
<div class="t" style="left:809px;top:282px;font-weight:normal;font-size:12px;letter-spacing:.5px">1.7.2015</div>
<div class="t" style="left:929px;top:282px;font-weight:normal;font-size:12px;letter-spacing:.5px">31.7.2015</div>
<div class="t" style="left:1044px;top:282px;width:116px;text-align:right;font-weight:normal;font-size:12px;letter-spacing:.5px">22</div>
<div class="t" style="left:1169px;top:282px;font-weight:normal;font-size:12px;letter-spacing:.5px">0715</div>
<svg class="a" style="left:376px;top:303px" width="15" height="14" viewBox="0 0 15 14"><rect x="0" y="1" width="15" height="13" fill="#ababab"/><rect x="0" y="0" width="15" height="2.2" rx="1" fill="#ff9418"/><rect x="1" y="2" width="13" height="10" fill="#fff"/><rect x="2" y="2" width="11" height="9" fill="#47a000"/><g fill="#b4e000"><rect x="7" y="3" width="1" height="1"/><rect x="9" y="3" width="1" height="1"/><rect x="11" y="3" width="1" height="1"/><rect x="3" y="5" width="1" height="1"/><rect x="5" y="5" width="1" height="1"/><rect x="7" y="5" width="1" height="1"/><rect x="9" y="5" width="1" height="1"/><rect x="11" y="5" width="1" height="1"/><rect x="3" y="7" width="1" height="1"/><rect x="5" y="7" width="1" height="1"/><rect x="7" y="7" width="1" height="1"/><rect x="9" y="7" width="1" height="1"/><rect x="11" y="7" width="1" height="1"/><rect x="3" y="9" width="1" height="1"/><rect x="5" y="9" width="1" height="1"/><rect x="7" y="9" width="1" height="1"/><rect x="9" y="9" width="1" height="1"/></g><rect x="2" y="2" width="4" height="2" fill="#ece6f6"/><rect x="11" y="9" width="2" height="2" fill="#ece6f6"/></svg>
<div class="t" style="left:399px;top:303px;width:42px;overflow:hidden;font-weight:bold;font-size:13px;letter-spacing:.6px">100253</div>
<div class="t" style="left:449px;top:303px;font-weight:bold;font-size:13px;letter-spacing:.1px">Leden 2015</div>
<div class="t" style="left:569px;top:303px;font-weight:bold;font-size:13px;letter-spacing:.1px">Leden</div>
<div class="t" style="left:684px;top:303px;width:116px;text-align:right;font-weight:bold;font-size:13px;letter-spacing:.5px">2015</div>
<div class="t" style="left:809px;top:303px;font-weight:bold;font-size:13px;letter-spacing:.5px">8.7.2015</div>
<div class="t" style="left:929px;top:303px;font-weight:bold;font-size:13px;letter-spacing:.5px">25.7.2015</div>
<div class="t" style="left:1044px;top:303px;width:116px;text-align:right;font-weight:bold;font-size:13px;letter-spacing:.5px">10</div>
<div class="t" style="left:1169px;top:303px;font-weight:bold;font-size:13px;letter-spacing:.5px">0115</div>
<svg class="a" style="left:376px;top:324px" width="15" height="14" viewBox="0 0 15 14"><rect x="0" y="1" width="15" height="13" fill="#ababab"/><rect x="0" y="0" width="15" height="2.2" rx="1" fill="#ff9418"/><rect x="1" y="2" width="13" height="10" fill="#fff"/><rect x="2" y="2" width="11" height="9" fill="#47a000"/><g fill="#b4e000"><rect x="7" y="3" width="1" height="1"/><rect x="9" y="3" width="1" height="1"/><rect x="11" y="3" width="1" height="1"/><rect x="3" y="5" width="1" height="1"/><rect x="5" y="5" width="1" height="1"/><rect x="7" y="5" width="1" height="1"/><rect x="9" y="5" width="1" height="1"/><rect x="11" y="5" width="1" height="1"/><rect x="3" y="7" width="1" height="1"/><rect x="5" y="7" width="1" height="1"/><rect x="7" y="7" width="1" height="1"/><rect x="9" y="7" width="1" height="1"/><rect x="11" y="7" width="1" height="1"/><rect x="3" y="9" width="1" height="1"/><rect x="5" y="9" width="1" height="1"/><rect x="7" y="9" width="1" height="1"/><rect x="9" y="9" width="1" height="1"/></g><rect x="2" y="2" width="4" height="2" fill="#ece6f6"/><rect x="11" y="9" width="2" height="2" fill="#ece6f6"/></svg>
<div class="t" style="left:399px;top:324px;width:42px;overflow:hidden;font-weight:bold;font-size:13px;letter-spacing:.6px">100490</div>
<div class="t" style="left:449px;top:324px;font-weight:bold;font-size:13px;letter-spacing:.1px">Srpen 2015</div>
<div class="t" style="left:569px;top:324px;font-weight:bold;font-size:13px;letter-spacing:.1px">Srpen</div>
<div class="t" style="left:684px;top:324px;width:116px;text-align:right;font-weight:bold;font-size:13px;letter-spacing:.5px">2015</div>
<div class="t" style="left:809px;top:324px;font-weight:bold;font-size:13px;letter-spacing:.5px">1.8.2015</div>
<div class="t" style="left:929px;top:324px;font-weight:bold;font-size:13px;letter-spacing:.5px">31.8.2015</div>
<div class="t" style="left:1044px;top:324px;width:116px;text-align:right;font-weight:bold;font-size:13px;letter-spacing:.5px">21</div>
<div class="t" style="left:1169px;top:324px;font-weight:bold;font-size:13px;letter-spacing:.5px">0815</div>
<svg class="a" style="left:376px;top:345px" width="15" height="14" viewBox="0 0 15 14"><rect x="0" y="1" width="15" height="13" fill="#ababab"/><rect x="0" y="0" width="15" height="2.2" rx="1" fill="#ff9418"/><rect x="1" y="2" width="13" height="10" fill="#fff"/><rect x="2" y="2" width="11" height="9" fill="#47a000"/><g fill="#b4e000"><rect x="7" y="3" width="1" height="1"/><rect x="9" y="3" width="1" height="1"/><rect x="11" y="3" width="1" height="1"/><rect x="3" y="5" width="1" height="1"/><rect x="5" y="5" width="1" height="1"/><rect x="7" y="5" width="1" height="1"/><rect x="9" y="5" width="1" height="1"/><rect x="11" y="5" width="1" height="1"/><rect x="3" y="7" width="1" height="1"/><rect x="5" y="7" width="1" height="1"/><rect x="7" y="7" width="1" height="1"/><rect x="9" y="7" width="1" height="1"/><rect x="11" y="7" width="1" height="1"/><rect x="3" y="9" width="1" height="1"/><rect x="5" y="9" width="1" height="1"/><rect x="7" y="9" width="1" height="1"/><rect x="9" y="9" width="1" height="1"/></g><rect x="2" y="2" width="4" height="2" fill="#ece6f6"/><rect x="11" y="9" width="2" height="2" fill="#ece6f6"/></svg>
<div class="t" style="left:399px;top:345px;width:42px;overflow:hidden;font-weight:bold;font-size:13px;letter-spacing:.6px">100491</div>
<div class="t" style="left:449px;top:345px;font-weight:bold;font-size:13px;letter-spacing:.1px">Září 2015</div>
<div class="t" style="left:569px;top:345px;font-weight:bold;font-size:13px;letter-spacing:.1px">Září</div>
<div class="t" style="left:684px;top:345px;width:116px;text-align:right;font-weight:bold;font-size:13px;letter-spacing:.5px">2015</div>
<div class="t" style="left:809px;top:345px;font-weight:bold;font-size:13px;letter-spacing:.5px">1.9.2015</div>
<div class="t" style="left:929px;top:345px;font-weight:bold;font-size:13px;letter-spacing:.5px">30.9.2015</div>
<div class="t" style="left:1044px;top:345px;width:116px;text-align:right;font-weight:bold;font-size:13px;letter-spacing:.5px">21</div>
<div class="t" style="left:1169px;top:345px;font-weight:bold;font-size:13px;letter-spacing:.5px">0915</div>
<svg class="a" style="left:376px;top:366px" width="15" height="14" viewBox="0 0 15 14"><rect x="0" y="1" width="15" height="13" fill="#ababab"/><rect x="0" y="0" width="15" height="2.2" rx="1" fill="#ff9418"/><rect x="1" y="2" width="13" height="10" fill="#fff"/><rect x="2" y="2" width="11" height="9" fill="#47a000"/><g fill="#b4e000"><rect x="7" y="3" width="1" height="1"/><rect x="9" y="3" width="1" height="1"/><rect x="11" y="3" width="1" height="1"/><rect x="3" y="5" width="1" height="1"/><rect x="5" y="5" width="1" height="1"/><rect x="7" y="5" width="1" height="1"/><rect x="9" y="5" width="1" height="1"/><rect x="11" y="5" width="1" height="1"/><rect x="3" y="7" width="1" height="1"/><rect x="5" y="7" width="1" height="1"/><rect x="7" y="7" width="1" height="1"/><rect x="9" y="7" width="1" height="1"/><rect x="11" y="7" width="1" height="1"/><rect x="3" y="9" width="1" height="1"/><rect x="5" y="9" width="1" height="1"/><rect x="7" y="9" width="1" height="1"/><rect x="9" y="9" width="1" height="1"/></g><rect x="2" y="2" width="4" height="2" fill="#ece6f6"/><rect x="11" y="9" width="2" height="2" fill="#ece6f6"/></svg>
<div class="t" style="left:399px;top:366px;width:42px;overflow:hidden;font-weight:bold;font-size:13px;letter-spacing:.6px">100492</div>
<div class="t" style="left:449px;top:366px;font-weight:bold;font-size:13px;letter-spacing:.1px">Říjen 2015</div>
<div class="t" style="left:569px;top:366px;font-weight:bold;font-size:13px;letter-spacing:.1px">Říjen</div>
<div class="t" style="left:684px;top:366px;width:116px;text-align:right;font-weight:bold;font-size:13px;letter-spacing:.5px">2015</div>
<div class="t" style="left:809px;top:366px;font-weight:bold;font-size:13px;letter-spacing:.5px">1.10.2015</div>
<div class="t" style="left:929px;top:366px;font-weight:bold;font-size:13px;letter-spacing:.5px">31.10.2015</div>
<div class="t" style="left:1044px;top:366px;width:116px;text-align:right;font-weight:bold;font-size:13px;letter-spacing:.5px">21</div>
<div class="t" style="left:1169px;top:366px;font-weight:bold;font-size:13px;letter-spacing:.5px">1015</div>
<svg class="a" style="left:376px;top:387px" width="15" height="14" viewBox="0 0 15 14"><rect x="0" y="1" width="15" height="13" fill="#ababab"/><rect x="0" y="0" width="15" height="2.2" rx="1" fill="#ff9418"/><rect x="1" y="2" width="13" height="10" fill="#fff"/><rect x="2" y="2" width="11" height="9" fill="#47a000"/><g fill="#b4e000"><rect x="7" y="3" width="1" height="1"/><rect x="9" y="3" width="1" height="1"/><rect x="11" y="3" width="1" height="1"/><rect x="3" y="5" width="1" height="1"/><rect x="5" y="5" width="1" height="1"/><rect x="7" y="5" width="1" height="1"/><rect x="9" y="5" width="1" height="1"/><rect x="11" y="5" width="1" height="1"/><rect x="3" y="7" width="1" height="1"/><rect x="5" y="7" width="1" height="1"/><rect x="7" y="7" width="1" height="1"/><rect x="9" y="7" width="1" height="1"/><rect x="11" y="7" width="1" height="1"/><rect x="3" y="9" width="1" height="1"/><rect x="5" y="9" width="1" height="1"/><rect x="7" y="9" width="1" height="1"/><rect x="9" y="9" width="1" height="1"/></g><rect x="2" y="2" width="4" height="2" fill="#ece6f6"/><rect x="11" y="9" width="2" height="2" fill="#ece6f6"/></svg>
<div class="t" style="left:399px;top:387px;width:42px;overflow:hidden;font-weight:bold;font-size:13px;letter-spacing:.6px">100494</div>
<div class="t" style="left:449px;top:387px;font-weight:bold;font-size:13px;letter-spacing:.1px">Listopad 2015</div>
<div class="t" style="left:569px;top:387px;font-weight:bold;font-size:13px;letter-spacing:.1px">Listopad</div>
<div class="t" style="left:684px;top:387px;width:116px;text-align:right;font-weight:bold;font-size:13px;letter-spacing:.5px">2015</div>
<div class="t" style="left:809px;top:387px;font-weight:bold;font-size:13px;letter-spacing:.5px">1.11.2015</div>
<div class="t" style="left:929px;top:387px;font-weight:bold;font-size:13px;letter-spacing:.5px">30.11.2015</div>
<div class="t" style="left:1044px;top:387px;width:116px;text-align:right;font-weight:bold;font-size:13px;letter-spacing:.5px">20</div>
<div class="t" style="left:1169px;top:387px;font-weight:bold;font-size:13px;letter-spacing:.5px">11</div>
<svg class="a" style="left:376px;top:408px" width="15" height="14" viewBox="0 0 15 14"><rect x="0" y="1" width="15" height="13" fill="#ababab"/><rect x="0" y="0" width="15" height="2.2" rx="1" fill="#ff9418"/><rect x="1" y="2" width="13" height="10" fill="#fff"/><rect x="2" y="2" width="11" height="9" fill="#47a000"/><g fill="#b4e000"><rect x="7" y="3" width="1" height="1"/><rect x="9" y="3" width="1" height="1"/><rect x="11" y="3" width="1" height="1"/><rect x="3" y="5" width="1" height="1"/><rect x="5" y="5" width="1" height="1"/><rect x="7" y="5" width="1" height="1"/><rect x="9" y="5" width="1" height="1"/><rect x="11" y="5" width="1" height="1"/><rect x="3" y="7" width="1" height="1"/><rect x="5" y="7" width="1" height="1"/><rect x="7" y="7" width="1" height="1"/><rect x="9" y="7" width="1" height="1"/><rect x="11" y="7" width="1" height="1"/><rect x="3" y="9" width="1" height="1"/><rect x="5" y="9" width="1" height="1"/><rect x="7" y="9" width="1" height="1"/><rect x="9" y="9" width="1" height="1"/></g><rect x="2" y="2" width="4" height="2" fill="#ece6f6"/><rect x="11" y="9" width="2" height="2" fill="#ece6f6"/></svg>
<div class="t" style="left:399px;top:408px;width:42px;overflow:hidden;font-weight:bold;font-size:13px;letter-spacing:.6px">100495</div>
<div class="t" style="left:449px;top:408px;font-weight:bold;font-size:13px;letter-spacing:.1px">Prosinec 2015</div>
<div class="t" style="left:569px;top:408px;font-weight:bold;font-size:13px;letter-spacing:.1px">Prosinec</div>
<div class="t" style="left:684px;top:408px;width:116px;text-align:right;font-weight:bold;font-size:13px;letter-spacing:.5px">2015</div>
<div class="t" style="left:809px;top:408px;font-weight:bold;font-size:13px;letter-spacing:.5px">1.12.2015</div>
<div class="t" style="left:929px;top:408px;font-weight:bold;font-size:13px;letter-spacing:.5px">31.12.2015</div>
<div class="t" style="left:1044px;top:408px;width:116px;text-align:right;font-weight:bold;font-size:13px;letter-spacing:.5px">21</div>
<div class="t" style="left:1169px;top:408px;font-weight:bold;font-size:13px;letter-spacing:.5px">1215</div>
<div class="a" style="left:355px;top:464px;width:916px;height:1px;background:#8db2e0"></div>
<div class="a" style="left:355px;top:465px;width:916px;height:40px;background:#e0ecfc"></div>
<div class="t" style="left:374px;top:477px;letter-spacing:.3px">Count=12</div>
<div class="a" style="left:353px;top:505px;width:918px;height:1px;background:#6f99d0"></div>
<div class="a" style="left:353px;top:508px;width:918px;height:26px;background:#b9cee8;border-left:1px solid #8fa9cc;border-bottom:1px solid #8fa9cc"></div>
<div class="a" style="left:357px;top:508px;width:110px;height:23px;background:#e5eefa;border-radius:0 0 3px 3px;box-shadow:0 1px 0 #9fb7d6"></div>
<svg class="a" style="left:362px;top:512px" width="15" height="14" viewBox="0 0 15 14"><rect x="0" y="1" width="15" height="13" fill="#ababab"/><rect x="0" y="0" width="15" height="2.2" rx="1" fill="#ff9418"/><rect x="1" y="2" width="13" height="10" fill="#fff"/><rect x="2" y="2" width="11" height="9" fill="#47a000"/><g fill="#b4e000"><rect x="7" y="3" width="1" height="1"/><rect x="9" y="3" width="1" height="1"/><rect x="11" y="3" width="1" height="1"/><rect x="3" y="5" width="1" height="1"/><rect x="5" y="5" width="1" height="1"/><rect x="7" y="5" width="1" height="1"/><rect x="9" y="5" width="1" height="1"/><rect x="11" y="5" width="1" height="1"/><rect x="3" y="7" width="1" height="1"/><rect x="5" y="7" width="1" height="1"/><rect x="7" y="7" width="1" height="1"/><rect x="9" y="7" width="1" height="1"/><rect x="11" y="7" width="1" height="1"/><rect x="3" y="9" width="1" height="1"/><rect x="5" y="9" width="1" height="1"/><rect x="7" y="9" width="1" height="1"/><rect x="9" y="9" width="1" height="1"/></g><rect x="2" y="2" width="4" height="2" fill="#ece6f6"/><rect x="11" y="9" width="2" height="2" fill="#ece6f6"/></svg>
<div class="t" style="left:380px;top:512px">Měsíční období</div>
<!-- /grid -->
<!-- ===== DETAIL PANEL ===== -->
<div class="a" style="left:353px;top:540px;width:930px;height:400px;border:1px solid #8ea4bc;background:#fff"></div>
<div class="phdr" style="left:354px;top:541px;width:917px;background:#b9cfe9;border-top:1px solid #e3edf8;border-bottom-color:#6a90d0"></div>
<svg class="a" style="left:360px;top:545px" width="15" height="14" viewBox="0 0 15 14"><rect x="0" y="1" width="15" height="13" fill="#ababab"/><rect x="0" y="0" width="15" height="2.2" rx="1" fill="#ff9418"/><rect x="1" y="2" width="13" height="10" fill="#fff"/><rect x="2" y="2" width="11" height="9" fill="#47a000"/><g fill="#b4e000"><rect x="7" y="3" width="1" height="1"/><rect x="9" y="3" width="1" height="1"/><rect x="11" y="3" width="1" height="1"/><rect x="3" y="5" width="1" height="1"/><rect x="5" y="5" width="1" height="1"/><rect x="7" y="5" width="1" height="1"/><rect x="9" y="5" width="1" height="1"/><rect x="11" y="5" width="1" height="1"/><rect x="3" y="7" width="1" height="1"/><rect x="5" y="7" width="1" height="1"/><rect x="7" y="7" width="1" height="1"/><rect x="9" y="7" width="1" height="1"/><rect x="11" y="7" width="1" height="1"/><rect x="3" y="9" width="1" height="1"/><rect x="5" y="9" width="1" height="1"/><rect x="7" y="9" width="1" height="1"/><rect x="9" y="9" width="1" height="1"/></g><rect x="2" y="2" width="4" height="2" fill="#ece6f6"/><rect x="11" y="9" width="2" height="2" fill="#ece6f6"/></svg>
<div class="ptitle" style="left:378px;top:545px;color:#2e5596">Červenec 2015</div>

<!-- detail content -->
<div class="a" style="left:354px;top:563px;width:123px;height:377px;background:#e0ecfc;border-right:1px solid #7e9fcf"></div>
<div class="a" style="left:356px;top:564px;width:122px;height:23px;background:linear-gradient(#f4f8fe 0,#e6eff9 40%,#cfdff2 55%,#e9f1fb 100%);border:1px solid #7e9fcf"></div>
<div class="a" style="left:354px;top:587px;width:124px;height:21px;background:#fff;border-left:1px solid #7e9fcf"></div>
<div class="a" style="left:356px;top:608px;width:122px;height:23px;background:linear-gradient(#f4f8fe 0,#e6eff9 40%,#cfdff2 55%,#e9f1fb 100%);border:1px solid #7e9fcf"></div>
<div class="t" style="left:385px;top:569px;letter-spacing:.2px">Základní údaje</div>
<div class="t" style="left:385px;top:591px;letter-spacing:.2px">Měsíční kurzy</div>
<div class="t" style="left:385px;top:613px;letter-spacing:.2px">Smazání</div>
<svg class="a" style="left:365px;top:611px" width="16" height="16" viewBox="0 0 16 16"><path d="M3.5 3.5 L12.5 12.5 M12.5 3.5 L3.5 12.5" stroke="#d84030" stroke-width="4.2" stroke-linecap="round"/><path d="M3.5 3.5 L12.5 12.5 M12.5 3.5 L3.5 12.5" stroke="#f56a55" stroke-width="2.8" stroke-linecap="round"/></svg>
<div class="t" style="left:496px;top:574px;font-size:16px;font-weight:bold;letter-spacing:.6px;line-height:18px">Měsíční kurzy</div>
<div class="a" style="left:526px;top:659px;width:66px;height:30px;border:1px solid #7b8aa3;border-radius:3px;background:linear-gradient(#fdfdfe,#f0f2f5 50%,#dde2e8)"></div>
<svg class="a" style="left:533px;top:665px" width="16" height="16" viewBox="0 0 16 16"><defs><radialGradient id="gn" cx=".4" cy=".35" r=".7"><stop offset="0" stop-color="#c4ec6a"/><stop offset="1" stop-color="#4c9c00"/></radialGradient></defs><circle cx="8" cy="8" r="7" fill="url(#gn)" stroke="#3f8a00" stroke-width="1"/><path d="M8 4 V12 M4 8 H12" stroke="#fff" stroke-width="2.2"/></svg>
<div class="t" style="left:553px;top:667px">Nový</div>
<div class="a" style="left:596px;top:659px;width:80px;height:30px;border:1px solid #c9cdd4;border-radius:3px;background:linear-gradient(#fdfdfe,#f3f4f6 50%,#e6e9ed)"></div>
<svg class="a" style="left:603px;top:665px" width="16" height="16" viewBox="0 0 16 16"><path d="M2.5 4.5 L4.5 2.5 L8 6 L11.5 2.5 L13.5 4.5 L10 8 L13.5 11.5 L11.5 13.5 L8 10 L4.5 13.5 L2.5 11.5 L6 8 Z" fill="#f7a9a0" stroke="#f09488" stroke-width="1" stroke-linejoin="round"/></svg>
<div class="t" style="left:623px;top:667px;color:#a0a0a0">Smazat</div>
<div class="a" style="left:680px;top:659px;width:91px;height:30px;border:1px solid #c9cdd4;border-radius:3px;background:linear-gradient(#fdfdfe,#f3f4f6 50%,#e6e9ed)"></div>
<svg class="a" style="left:687px;top:665px" width="17" height="17" viewBox="0 0 17 17"><path d="M1.5 1.5 H7 L9 3.5 V12.5 H1.5 Z" fill="#f4f8fc" stroke="#9cc0e4" stroke-width="1"/><path d="M6.5 4.5 H12 L14.5 7 V15.5 H6.5 Z" fill="#f4f8fc" stroke="#9cc0e4" stroke-width="1"/><path d="M8 9 H13 M8 11 H13 M8 13 H13" stroke="#c0d8f0" stroke-width=".8"/></svg>
<div class="t" style="left:707px;top:667px;color:#a0a0a0">Kopírovat</div>
<div class="t" style="left:486px;top:734px;letter-spacing:.3px">Kurzy:</div>
<div class="a" style="left:526px;top:693px;width:297px;height:129px;border:1px solid #7aa0d8;background:#fff"></div>
<div class="a" style="left:527px;top:694px;width:295px;height:21px;background:linear-gradient(#fbfdff,#d0e3fb)"></div>
<div class="a" style="left:527px;top:715px;width:295px;height:1px;background:#7aa0d8"></div>
<div class="a" style="left:542px;top:697px;width:1px;height:15px;background:#93c1f6"></div>
<div class="a" style="left:566px;top:697px;width:1px;height:15px;background:#93c1f6"></div>
<div class="a" style="left:686px;top:697px;width:1px;height:15px;background:#93c1f6"></div>
<div class="a" style="left:807px;top:697px;width:1px;height:15px;background:#93c1f6"></div>
<div class="t" style="left:571px;top:698px">Měna</div>
<div class="t" style="left:691px;top:698px">Kurz</div>
<div class="a" style="left:527px;top:716px;width:15px;height:64px;background:#ebf3fd"></div>
<svg class="a" style="left:531px;top:723px" width="8" height="8" viewBox="0 0 8 8"><path d="M0.5 0.5 H7.5 L4.5 3.5 V7.5 H3.5 V3.5 Z" fill="#7d9fd0"/></svg>
<div class="a" style="left:527px;top:737px;width:295px;height:1px;background:#c6d6ec"></div>
<div class="a" style="left:527px;top:758px;width:295px;height:1px;background:#c6d6ec"></div>
<div class="a" style="left:527px;top:779px;width:295px;height:1px;background:#c6d6ec"></div>
<div class="a" style="left:542px;top:716px;width:1px;height:64px;background:#c6d6ec"></div>
<div class="a" style="left:566px;top:716px;width:1px;height:64px;background:#c6d6ec"></div>
<div class="a" style="left:686px;top:716px;width:1px;height:64px;background:#c6d6ec"></div>
<div class="a" style="left:807px;top:716px;width:1px;height:64px;background:#c6d6ec"></div>
<svg class="a" style="left:547px;top:740px" width="15" height="16" viewBox="0 0 15 16"><rect x="0" y="0" width="15" height="16" fill="#aaa"/><rect x="1" y="1" width="13" height="13" fill="#fff"/><path d="M1.5 7.5 L4.5 5.5 L9.5 10.5 L12.5 7.5" stroke="#d01010" stroke-width="1" stroke-dasharray="1 1" fill="none"/><path d="M3.5 10.5 L10.5 3.5 L12.5 5.5" stroke="#1a8a00" stroke-width="1" stroke-dasharray="1 1" fill="none"/><circle cx="4.5" cy="5.5" r="1.5" fill="#d81010"/><circle cx="9.5" cy="10.5" r="1.5" fill="#d81010"/><circle cx="3.5" cy="10.5" r="1.5" fill="#1a8a00"/><circle cx="10.5" cy="3.5" r="1.5" fill="#1a8a00"/><g fill="#fff"><rect x="4" y="5" width="1" height="1"/><rect x="9" y="10" width="1" height="1"/><rect x="3" y="10" width="1" height="1"/><rect x="10" y="3" width="1" height="1"/></g></svg>
<svg class="a" style="left:547px;top:761px" width="15" height="16" viewBox="0 0 15 16"><rect x="0" y="0" width="15" height="16" fill="#aaa"/><rect x="1" y="1" width="13" height="13" fill="#fff"/><path d="M1.5 7.5 L4.5 5.5 L9.5 10.5 L12.5 7.5" stroke="#d01010" stroke-width="1" stroke-dasharray="1 1" fill="none"/><path d="M3.5 10.5 L10.5 3.5 L12.5 5.5" stroke="#1a8a00" stroke-width="1" stroke-dasharray="1 1" fill="none"/><circle cx="4.5" cy="5.5" r="1.5" fill="#d81010"/><circle cx="9.5" cy="10.5" r="1.5" fill="#d81010"/><circle cx="3.5" cy="10.5" r="1.5" fill="#1a8a00"/><circle cx="10.5" cy="3.5" r="1.5" fill="#1a8a00"/><g fill="#fff"><rect x="4" y="5" width="1" height="1"/><rect x="9" y="10" width="1" height="1"/><rect x="3" y="10" width="1" height="1"/><rect x="10" y="3" width="1" height="1"/></g></svg>
<div class="t" style="left:571px;top:741px;font-weight:bold;font-size:13px;letter-spacing:.2px">Dolar USD</div>
<div class="t" style="left:571px;top:762px;font-weight:bold;font-size:13px;letter-spacing:.2px">Euro EUR</div>
<div class="t" style="left:686px;top:741px;width:117px;text-align:right;font-weight:bold;font-size:13px;letter-spacing:.2px">24,94000</div>
<div class="t" style="left:686px;top:762px;width:117px;text-align:right;font-weight:bold;font-size:13px;letter-spacing:.2px">27,12000</div>
<div class="a" style="left:807px;top:738px;width:15px;height:42px;background:#e3edfa;border:1px solid #8fb0d8;border-radius:1px"></div>
<div class="a" style="left:811px;top:744px;width:0;height:0;border-left:4px solid transparent;border-right:4px solid transparent;border-bottom:4px solid #3f66a0"></div>
<div class="a" style="left:811px;top:769px;width:0;height:0;border-left:4px solid transparent;border-right:4px solid transparent;border-top:4px solid #3f66a0"></div>
<div class="a" style="left:527px;top:780px;width:295px;height:41px;background:#e0ecfc;border-top:1px solid #c6d6ec"></div>
<div class="t" style="left:546px;top:793px;letter-spacing:.3px">Count=2</div>
<div class="a" style="left:526px;top:854px;width:57px;height:36px;border:1px solid #7b8aa3;border-radius:3px;background:linear-gradient(#fdfdfe,#f0f2f5 50%,#dde2e8)"></div>
<svg class="a" style="left:535px;top:863px" width="17" height="17" viewBox="0 0 17 17"><path d="M1.5 2.5 Q1.5 1.5 2.5 1.5 H14.5 Q15.5 1.5 15.5 2.5 V14.5 Q15.5 15.5 14.5 15.5 H2.5 Q1.5 15.5 1.5 14.5 Z" fill="#3d95df" stroke="#2a6fb5" stroke-width="1"/><rect x="3.5" y="2" width="10" height="6.5" fill="#fff"/><path d="M4.5 4 H7 M8 4 H12.5 M4.5 6 H6 M7 6 H12.5" stroke="#667" stroke-width=".8"/><rect x="5" y="10.5" width="7" height="5" fill="#e8f0f8"/><rect x="6" y="12" width="1.5" height="2.5" fill="#445"/></svg>
<div class="t" style="left:556px;top:865px">OK</div>
<div class="a" style="left:353px;top:940px;width:918px;height:27px;background:#b9cee8;border-left:1px solid #8fa9cc;border-bottom:1px solid #8fa9cc;border-top:1px solid #7e9fcf"></div>
<div class="a" style="left:357px;top:940px;width:110px;height:24px;background:#e5eefa;border-radius:0 0 3px 3px;box-shadow:0 1px 0 #9fb7d6"></div>
<svg class="a" style="left:361px;top:945px" width="15" height="14" viewBox="0 0 15 14"><rect x="0" y="1" width="15" height="13" fill="#ababab"/><rect x="0" y="0" width="15" height="2.2" rx="1" fill="#ff9418"/><rect x="1" y="2" width="13" height="10" fill="#fff"/><rect x="2" y="2" width="11" height="9" fill="#47a000"/><g fill="#b4e000"><rect x="7" y="3" width="1" height="1"/><rect x="9" y="3" width="1" height="1"/><rect x="11" y="3" width="1" height="1"/><rect x="3" y="5" width="1" height="1"/><rect x="5" y="5" width="1" height="1"/><rect x="7" y="5" width="1" height="1"/><rect x="9" y="5" width="1" height="1"/><rect x="11" y="5" width="1" height="1"/><rect x="3" y="7" width="1" height="1"/><rect x="5" y="7" width="1" height="1"/><rect x="7" y="7" width="1" height="1"/><rect x="9" y="7" width="1" height="1"/><rect x="11" y="7" width="1" height="1"/><rect x="3" y="9" width="1" height="1"/><rect x="5" y="9" width="1" height="1"/><rect x="7" y="9" width="1" height="1"/><rect x="9" y="9" width="1" height="1"/></g><rect x="2" y="2" width="4" height="2" fill="#ece6f6"/><rect x="11" y="9" width="2" height="2" fill="#ece6f6"/></svg>
<div class="t" style="left:380px;top:945px">Červenec 2015</div>

<!-- border overlays -->
<div class="a" style="left:3px;top:108px;width:1px;height:859px;background:#8aa4c6"></div>
<div class="a" style="left:4px;top:108px;width:1px;height:859px;background:#7c9fd2"></div>
<div class="a" style="left:345px;top:108px;width:1px;height:859px;background:#8aa4c6"></div>
<div class="a" style="left:346px;top:108px;width:1px;height:859px;background:#8fb0d8"></div>
<div class="a" style="left:353px;top:108px;width:1px;height:398px;background:#8aa4c6"></div>
<div class="a" style="left:354px;top:129px;width:1px;height:377px;background:#6a98d8"></div>
<div class="a" style="left:353px;top:541px;width:1px;height:426px;background:#8aa4c6"></div>
<div class="a" style="left:354px;top:562px;width:1px;height:378px;background:#6a98d8"></div>
<div class="a" style="left:4px;top:739px;width:1px;height:42px;background:#303030"></div>
<div class="a" style="left:345px;top:739px;width:1px;height:42px;background:#303030"></div>
</body></html>
